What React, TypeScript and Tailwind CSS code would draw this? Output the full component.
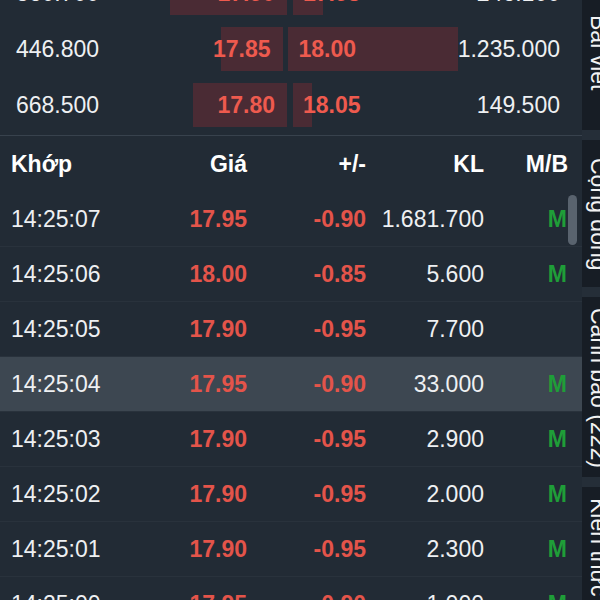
import React from "react";

// ─── Data ──────────────────────────────────────────────────────

const BOOK = [
  { bidVol: "360.700", bid: "17.90", bidBar: 117, ask: "17.95", askBar: 30, askVol: "246.100" },
  { bidVol: "446.800", bid: "17.85", bidBar: 62, ask: "18.00", askBar: 170, askVol: "1.235.000" },
  { bidVol: "668.500", bid: "17.80", bidBar: 94, ask: "18.05", askBar: 19, askVol: "149.500" },
];

const TRADES = [
  { time: "14:25:07", price: "17.95", change: "-0.90", vol: "1.681.700", side: "M" },
  { time: "14:25:06", price: "18.00", change: "-0.85", vol: "5.600", side: "M" },
  { time: "14:25:05", price: "17.90", change: "-0.95", vol: "7.700", side: "" },
  { time: "14:25:04", price: "17.95", change: "-0.90", vol: "33.000", side: "M", active: true },
  { time: "14:25:03", price: "17.90", change: "-0.95", vol: "2.900", side: "M" },
  { time: "14:25:02", price: "17.90", change: "-0.95", vol: "2.000", side: "M" },
  { time: "14:25:01", price: "17.90", change: "-0.95", vol: "2.300", side: "M" },
  { time: "14:25:00", price: "17.95", change: "-0.90", vol: "1.000", side: "M" },
];

const TABS = [
  { label: "Bài viết", cls: "h-[130px] pt-[15px]" },
  { label: "Cộng đồng", cls: "h-[147px] pt-[18px]" },
  { label: "Cảnh báo (222)", cls: "h-[180px] pt-[11px]" },
  { label: "Kiến thức", cls: "flex-1 pt-[11px]" },
];

const COLS = "grid grid-cols-[150px_97px_119px_118px_84px] items-center";

// ─── Components ────────────────────────────────────────────────

function OrderBook() {
  return (
    <div className="h-[136px] shrink-0 overflow-hidden flex flex-col justify-end border-b border-[#38424d]">
      {BOOK.map((r) => (
        <div key={r.bid} className="h-[56px] shrink-0 pt-[4px] pb-[8px] flex">
          <div className="w-[165px] pl-[16px] flex items-center text-[#eef0f2]">{r.bidVol}</div>
          <div className="relative w-[122px] flex items-center justify-end pr-[12px]">
            <div className="absolute right-0 top-0 bottom-0 bg-[#4a2b34]" style={{ width: r.bidBar }} />
            <span className="relative font-bold text-[#ee5a4e]">{r.bid}</span>
          </div>
          <div className="w-[6px]" />
          <div className="relative w-[172px] flex items-center pl-[10px]">
            <div className="absolute left-0 top-0 bottom-0 bg-[#4a2b34]" style={{ width: r.askBar }} />
            <span className="relative font-bold text-[#ee5a4e]">{r.ask}</span>
          </div>
          <div className="flex-1 flex items-center justify-end pr-[22px] text-[#eef0f2]">{r.askVol}</div>
        </div>
      ))}
    </div>
  );
}

function Trades() {
  return (
    <div className="relative flex-1">
      <div className={`${COLS} h-[56px] font-bold text-white`}>
        <span className="pl-[11px]">Khớp</span>
        <span className="text-right">Giá</span>
        <span className="text-right">+/-</span>
        <span className="text-right">KL</span>
        <span className="text-right">M/B</span>
      </div>
      {TRADES.map((t) => (
        <div
          key={t.time}
          className={`${COLS} h-[55px] border-b border-[#29323c] ${t.active ? "bg-[#3d4751]" : ""}`}
        >
          <span className="pl-[11px] text-[#eef0f2]">{t.time}</span>
          <span className="text-right font-bold text-[#e4544a]">{t.price}</span>
          <span className="text-right font-bold text-[#e4544a]">{t.change}</span>
          <span className="text-right text-[#eef0f2]">{t.vol}</span>
          <span className="text-right font-bold text-[#1f9e38] pr-[1px]">{t.side}</span>
        </div>
      ))}
      {/* scrollbar thumb */}
      <div className="absolute left-[568px] top-[59px] w-[9px] h-[50px] rounded-full bg-[#59636e]" />
    </div>
  );
}

function SideTabs() {
  return (
    <div className="w-[34px] shrink-0 flex flex-col gap-[10px] bg-[#252e38]">
      {TABS.map((t) => (
        <div key={t.label} className={`${t.cls} bg-[#171d25] flex justify-center`}>
          <span className="[writing-mode:vertical-rl] text-[#f2f2f2] leading-[26px] whitespace-nowrap">
            {t.label}
          </span>
        </div>
      ))}
    </div>
  );
}

export default function App() {
  return (
    <div className="w-[600px] h-[600px] overflow-hidden bg-[#222b35] font-['Liberation_Sans',Arial,sans-serif] text-[23px] leading-none">
      <div className="w-[616px] h-[600px] flex">
        <div className="w-[582px] shrink-0 flex flex-col">
          <OrderBook />
          <Trades />
        </div>
        <SideTabs />
      </div>
    </div>
  );
}
